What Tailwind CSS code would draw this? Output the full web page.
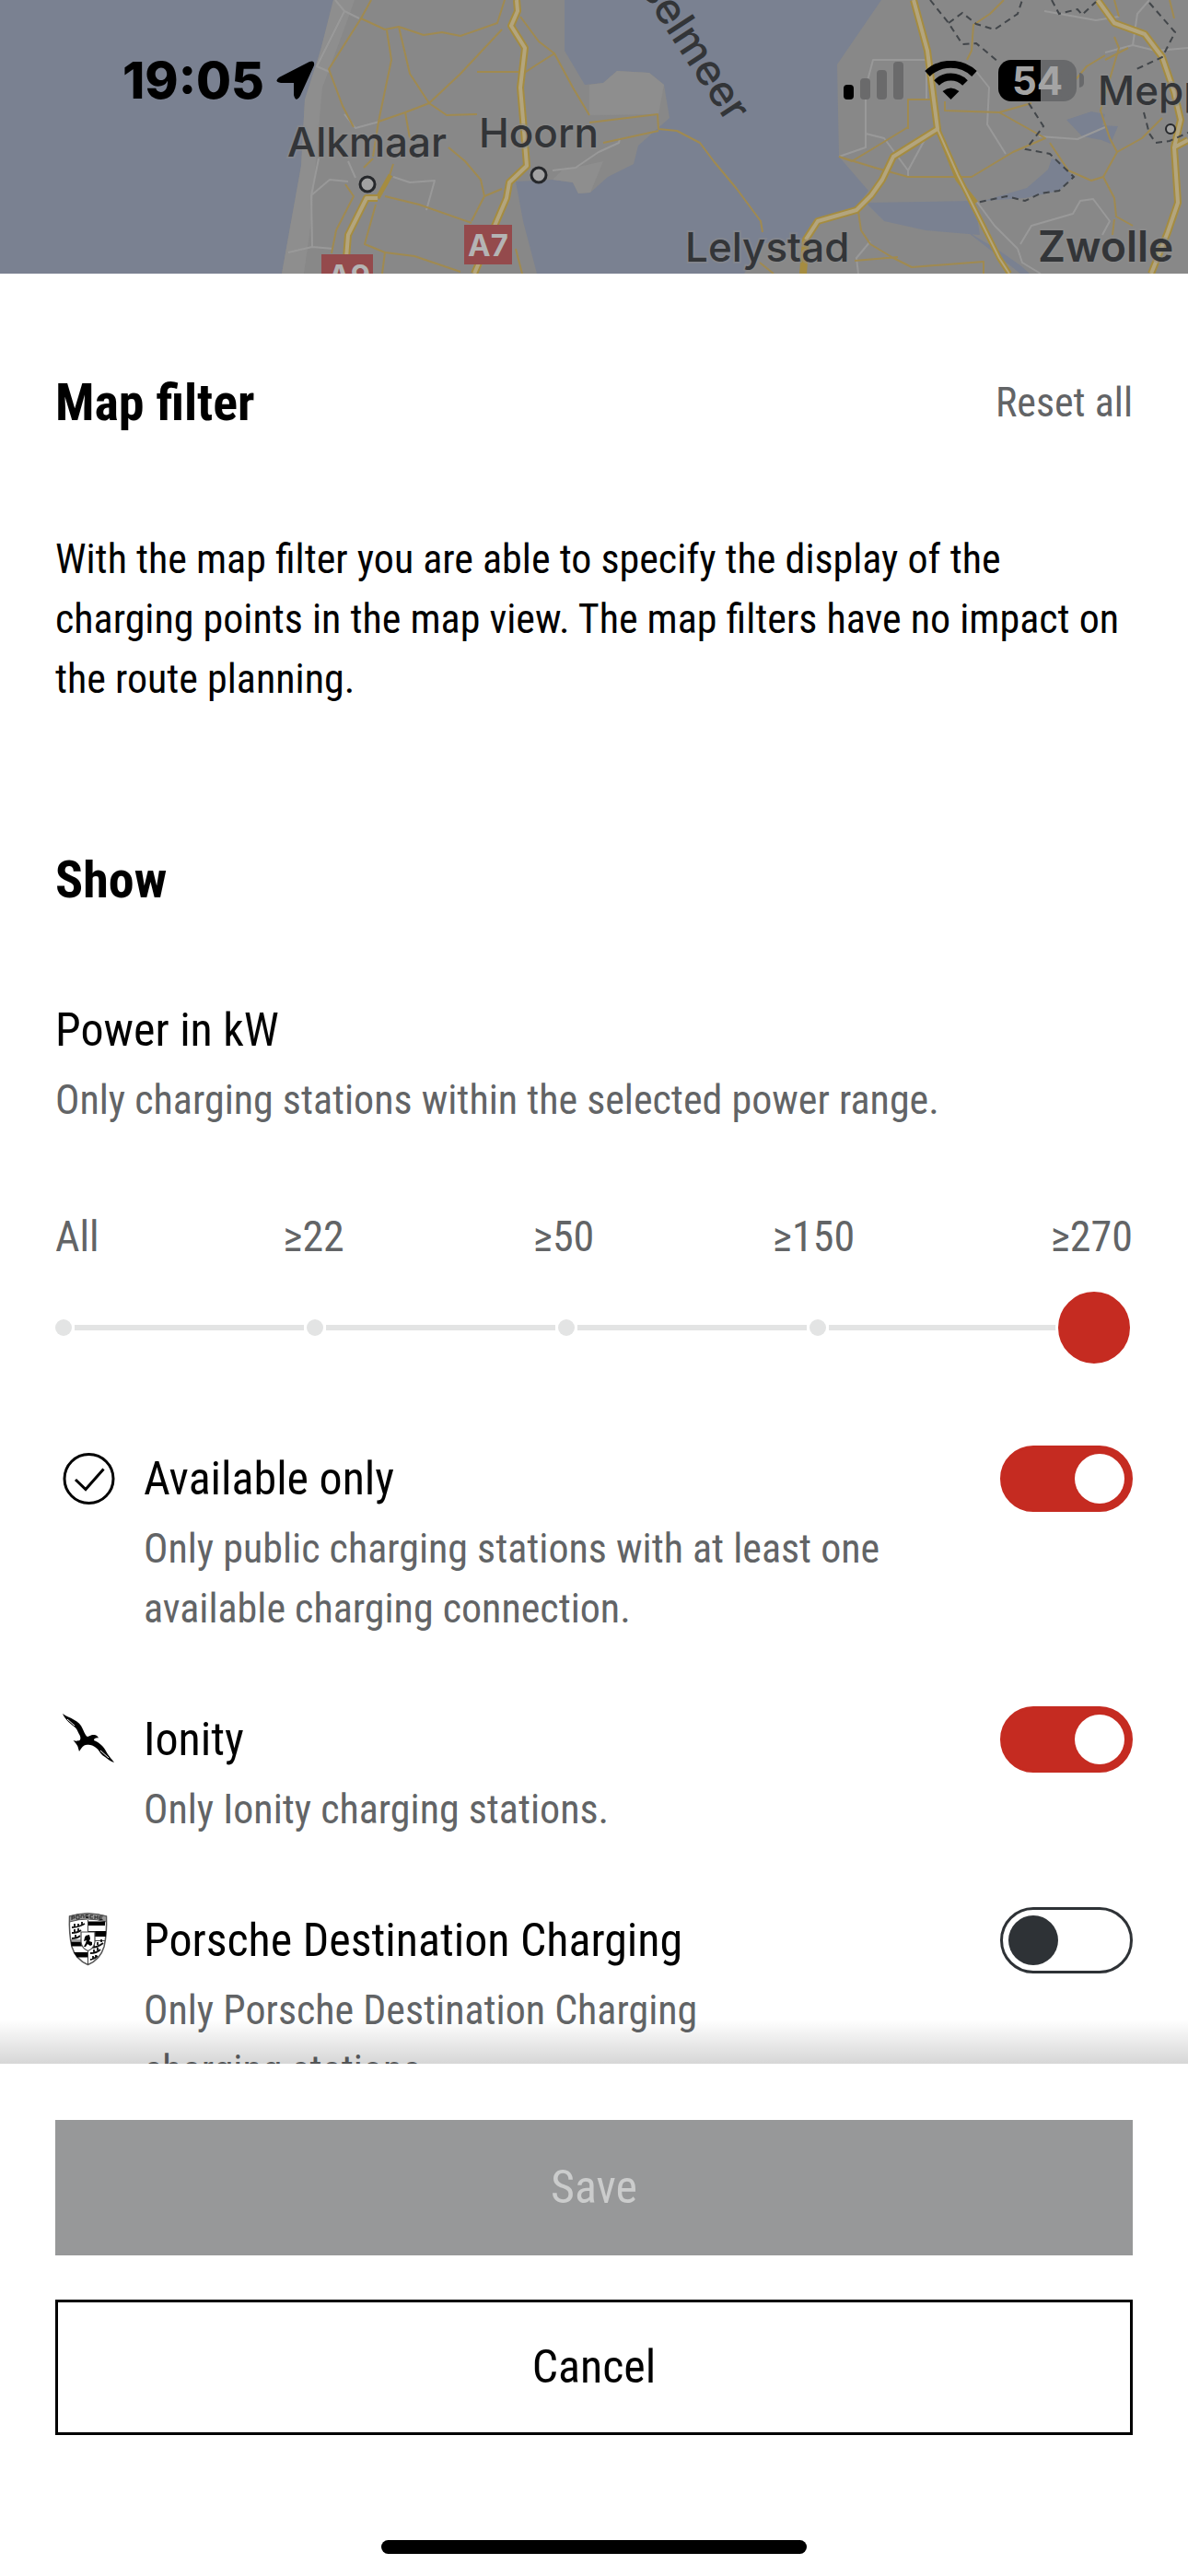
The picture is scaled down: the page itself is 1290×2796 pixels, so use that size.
<!DOCTYPE html>
<html lang="en">
  <head>
    <meta charset="UTF-8" />
    <meta name="viewport" content="width=device-width, initial-scale=1.0" />
    <title>Map filter</title>
    <script src="https://cdn.jsdelivr.net/npm/@tailwindcss/browser@4"></script>
  </head>
  <body
    class="flex h-screen flex-col overflow-hidden bg-white font-['Roboto_Condensed',Roboto,sans-serif] text-[44px] leading-[65px] text-black"
  >
    <!-- map behind the sheet -->
    <header class="relative h-[297px] shrink-0 overflow-hidden bg-[#7a8191]">
      <svg
        class="h-full w-full font-[Inter,sans-serif]"
        viewBox="0 0 1290 297"
        preserveAspectRatio="xMidYMid slice"
        fill="none"
        role="img"
        aria-label="Map of the IJsselmeer region"
      >
        <!-- land -->
        <path
          fill="#888"
          d="M362 0 348 55 331 108 327 180 318 230 306 297H583L568 240 560 197 600 195 622 198 628 210 641 209 660 192 688 178 693 158 727 128 721 92 705 79 670 77 655 90 635 92 613 55V0ZM957 0 909 70 911 170 943 207 926 230 885 243 868 262 830 264 808 297H1290V0Z"
        />
        <path
          fill="#8e8e8e"
          d="M362 0 348 55 331 108 327 180 318 230 306 297H330L338 240 345 150 350 95 378 20 385 0ZM721 92 705 79 670 77 655 90 640 92V125L715 124ZM600 195 622 198 628 210 641 209 655 175 610 185Z"
        />
        <!-- lakes -->
        <path
          fill="#7a8191"
          d="M940 220 1058 218 1064 255 1005 250 960 240ZM1068 218 1115 204 1138 184 1142 172 1152 176 1166 192 1150 207 1113 215ZM1158 130 1185 121 1200 124 1197 136 1214 137 1206 156 1196 152 1175 148ZM1048 250 1085 272 1108 288 1118 297H1108L1084 278Z"
        />
        <!-- minor roads -->
        <g stroke="#999" stroke-width="2" stroke-linejoin="round">
          <path
            d="M364 0 374 12 344 72 358 78M374 12 390 20M374 124 386 139 412 132M346 172 338 212 339 268 313 274M338 212 358 195 378 197M378 175 386 193M427 192 445 198 472 196 463 228M339 268 362 270M600 185 625 182 650 165 672 155 673 150"
          />
          <path
            d="M940 157V95L948 65H1006V107M940 145 960 150 986 185V192M986 185 1005 150M940 145V160L911 170M1058 75 1074 95 1072 135 1092 167M1128 148 1170 151 1200 138M1134 12 1190 22 1215 18M1200 57 1230 49 1255 55 1290 52M1230 49 1235 15 1248 0M1060 218 1080 245 1105 270M1108 265 1120 245 1165 232 1173 218 1187 216 1205 240 1197 255M932 297 930 280 945 262M1105 270 1110 285 1130 297"
          />
        </g>
        <!-- country roads -->
        <g stroke="#a08a50" stroke-width="2" stroke-linejoin="round">
          <path
            d="M403 0 392 20 357 75 372 115 384 138M392 20 418 32 433 29 460 38 480 35 500 39 540 25 548 0M420 33 425 65 411 132 405 170M433 29 445 80 466 112M411 132 440 122 466 112 500 80 545 32M466 112 485 125 518 124M440 122 445 150M565 18 585 45 602 58 622 95 640 125M602 58 580 72 565 82M518 78H565M487 160 505 175 522 195 526 213 512 240M526 213 545 205M418 213 455 222 512 242M405 172 395 182M375 200 384 213 365 250 360 275M408 222 396 265 418 274 450 278 500 295M418 274 415 297M560 270 567 297M427 178 420 200 408 216"
          />
          <path
            d="M640 133 714 124 715 140 735 142 760 155 775 175 800 205 826 240 828 252M715 142 655 155M911 170 950 182 986 192 1055 192 1100 165 1135 150 1085 122M986 140V108H1012M911 170 925 175 950 160 986 138M1026 110V120L1085 122 1120 112M1200 60 1180 72 1165 90M1090 0 1075 15 1057 27 1055 55 1050 65M932 230 935 250 945 265 970 280 990 290 1068 284V297M1215 18 1210 0M1210 40 1215 52 1195 120 1205 150 1213 165 1198 192 1185 196 1160 185 1140 155M1198 192 1210 215 1212 235 1230 245M1213 165 1240 150 1262 128M1270 0 1275 20M1200 65 1225 52M928 283 975 279M825 285 840 297M1210 238 1208 255"
          />
        </g>
        <!-- motorways -->
        <g stroke="#a58c40" stroke-width="8" stroke-linejoin="round">
          <path
            d="M561 0 562 12 555 28 570 52 565 95 568 130 572 180 553 198 550 215 535 250 515 297M410 215H398L378 255 376 280M992 0 1007 55 1018 140 970 170 958 195 946 212 930 228 888 240 875 260 872 297M1192 0 1210 25 1243 37 1262 62 1275 100 1282 130 1275 160 1279 220 1268 252 1250 297M1275 160 1290 152"
          />
          <path
            d="M424 190 410 215M1018 140 1040 195 1060 220"
            stroke-width="5"
          />
          <path d="M1018 140 1040 190 1085 280 1096 297" stroke-width="6" />
        </g>
        <g stroke="#b3a57e" stroke-width="4" stroke-linejoin="round">
          <path
            d="M561 0 562 12 555 28 570 52 565 95 568 130 572 180 553 198 550 215 535 250 515 297M410 215H398L378 255 376 280M992 0 1007 55 1018 140 970 170 958 195 946 212 930 228 888 240 875 260M1192 0 1210 25 1243 37 1262 62 1275 100 1282 130 1275 160 1279 220 1268 252 1250 297M1275 160 1290 152"
          />
          <path d="M1018 140 1040 190 1085 280 1096 297" stroke-width="2" />
        </g>
        <!-- province borders -->
        <path
          stroke="#42464a"
          stroke-width="2"
          stroke-dasharray="7 5"
          d="M1010 0 1030 25 1045 48 1060 47 1085 68M1030 25 1045 14 1060 26 1080 32 1105 15 1110 0M1142 0 1150 15 1170 10 1175 16 1190 2M1248 3 1276 35 1262 62 1232 76M1117 112 1133 137 1114 162 1140 167 1166 192 1150 207 1130 210 1113 218 1093 213 1060 220M1242 122 1248 145 1255 155 1270 153 1290 144"
        />
        <!-- towns -->
        <g fill="#a2a2a2" stroke="#26282b" stroke-width="3">
          <circle cx="399" cy="200" r="8" />
          <circle cx="585" cy="190" r="8" />
          <circle cx="1271" cy="140" r="5" stroke-width="2" />
        </g>
        <!-- road shields -->
        <path fill="#944a4c" d="M504 244h52v43h-52zM349 276h56v30h-56z" />
        <g fill="#b4b4b4" font-size="33" font-weight="700">
          <text x="508" y="278">A7</text>
          <text x="356" y="311">A9</text>
        </g>
        <g
          fill="#333538"
          stroke="#8c8c8c"
          stroke-opacity=".5"
          stroke-width="4"
          paint-order="stroke"
          font-size="44"
          font-weight="500"
        >
          <text x="312" y="170">Alkmaar</text>
          <text x="520" y="160">Hoorn</text>
          <text x="744" y="284">Lelystad</text>
          <text x="1127" y="284" font-size="46" font-weight="600">Zwolle</text>
          <text x="1192" y="114">Meppel</text>
          <text
            transform="translate(790 135) rotate(57)"
            text-anchor="end"
            font-size="46"
            stroke="none"
          >
            IJsselmeer
          </text>
        </g>
      </svg>

      <!-- status bar -->
      <div
        class="absolute inset-x-0 top-0 flex h-[174px] items-center justify-between pr-[113px] pl-[133px] font-[Inter,sans-serif]"
      >
        <div class="flex items-center gap-3">
          <span class="text-[55px] leading-[64px] font-extrabold">19:05</span>
          <svg class="size-11" viewBox="0 0 44 44">
            <path
              d="M4 19 37 2q6-2 5 4L27 39q-5 8-7-1V25H6q-8-1-2-6z"
              fill="#000"
            />
          </svg>
        </div>
        <div class="flex items-center gap-[23px]">
          <svg class="h-[42px] w-[65px]" viewBox="0 0 65 42">
            <rect y="26" width="11" height="16" rx="4" />
            <g fill="#6a6a6b">
              <rect x="18" y="19" width="11" height="23" rx="4" />
              <rect x="36" y="10" width="11" height="32" rx="4" />
              <rect x="54" y="1" width="11" height="41" rx="4" />
            </g>
          </svg>
          <svg
            class="h-[42px] w-[57px]"
            viewBox="0 0 57 42"
            fill="none"
            stroke="#000"
            stroke-width="8"
          >
            <path d="M3 14a37 37 0 0 1 51 0M13 24a22 22 0 0 1 31 0" />
            <path d="M28.500 42l-9-9q9-7 18 0z" fill="#000" stroke="none" />
          </svg>
          <div class="flex items-center gap-[3px]">
            <div
              class="flex h-[45px] w-[85px] items-center justify-center rounded-[14px] bg-linear-to-r from-black from-54% to-[#68696b] to-54% text-[42px] leading-[45px] font-bold text-[#a4a4a4]"
            >
              54
            </div>
            <div class="h-4 w-[5px] rounded-r-full bg-[#68696b]"></div>
          </div>
        </div>
      </div>
    </header>

    <main class="relative min-h-0 flex-1 overflow-hidden px-[60px]">
      <div class="mt-[104px] flex items-center justify-between">
        <h1 class="text-[56px] leading-[72px] font-bold">Map filter</h1>
        <button type="button" class="text-[#626466]">Reset all</button>
      </div>
      <p class="mt-[102px]">
        With the map filter you are able to specify the display of the
        charging points in the map view. The map filters have no impact on
        the route planning.
      </p>

      <h2 class="mt-[149px] text-[56px] leading-[72px] font-bold">Show</h2>
      <label for="power" class="mt-[91px] block text-[50px] leading-[72px]">
        Power in kW
      </label>
      <p id="power-hint" class="mt-2 text-[#626466]">
        Only charging stations within the selected power range.
      </p>

      <!-- slider -->
      <div
        class="mt-[83px] flex justify-between text-[46px] whitespace-nowrap text-[#626466]"
      >
        <span class="flex w-[18px]">All</span>
        <span class="flex w-[18px] justify-center">≥22</span>
        <span class="flex w-[18px] justify-center">≥50</span>
        <span class="flex w-[18px] justify-center">≥150</span>
        <span class="flex w-[84px] justify-end">≥270</span>
      </div>
      <div class="relative mt-6 flex h-[84px] items-center gap-[3px]">
        <i class="size-[18px] rounded-full bg-[#e3e4e4]"></i>
        <i class="h-1.5 flex-1 bg-[#e3e4e4]"></i>
        <i class="size-[18px] rounded-full bg-[#e3e4e4]"></i>
        <i class="h-1.5 flex-1 bg-[#e3e4e4]"></i>
        <i class="size-[18px] rounded-full bg-[#e3e4e4]"></i>
        <i class="h-1.5 flex-1 bg-[#e3e4e4]"></i>
        <i class="size-[18px] rounded-full bg-[#e3e4e4]"></i>
        <i class="h-1.5 flex-1 bg-[#e3e4e4]"></i>
        <i class="w-[78px]"></i>
        <input
          id="power"
          type="range"
          min="0"
          max="4"
          value="4"
          aria-describedby="power-hint"
          class="absolute inset-0 h-full w-full appearance-none bg-transparent [&::-webkit-slider-thumb]:size-[84px] [&::-webkit-slider-thumb]:appearance-none [&::-webkit-slider-thumb]:rounded-full [&::-webkit-slider-thumb]:border-[3px] [&::-webkit-slider-thumb]:border-white [&::-webkit-slider-thumb]:bg-[#c52b21]"
        />
      </div>

      <!-- filters -->
      <ul class="mt-[86px] flex flex-col gap-[73px]">
        <li class="flex items-start">
          <svg
            class="mr-6 h-[72px] w-[72px] shrink-0"
            viewBox="0 0 72 72"
            fill="none"
            stroke="#000"
            stroke-width="3"
          >
            <circle cx="36.500" cy="36" r="26.500" />
            <path d="M22 37l11 10.500 19.500-22" />
          </svg>
          <div class="flex-1">
            <label for="available" class="block text-[50px] leading-[72px]">
              Available only
            </label>
            <p class="mt-2 text-[#626466]">
              Only public charging stations with at least one<br />
              available charging connection.
            </p>
          </div>
          <input
            id="available"
            type="checkbox"
            role="switch"
            checked
            class="flex h-[72px] w-36 appearance-none items-center rounded-full border-[3px] border-[#2e3236] px-1.5 before:size-[54px] before:rounded-full before:bg-[#2e3236] checked:justify-end checked:border-[#c52b21] checked:bg-[#c52b21] checked:before:bg-white"
          />
        </li>
        <li class="flex items-start">
          <svg class="mr-6 h-[72px] w-[72px] shrink-0" viewBox="0 0 72 72">
            <path
              d="M8 8C12 11 16 12 20 14.500 25 17 28 20 29.500 24 31 27 32 30 34 32.500 36 34 38 31 41 31 44 30.500 46 32 47 34.500 44 34 42 35 42 37 45 38 48 40 51 43 54 46 55 49 57 52 59 55 61 57 64 61 60 60 57 57 54 55 50 53 48 49 46 46.500 43 44 41 42.500 38 42 35 41.500 33 41.500 31.500 42.500 29 44 28 46 26 49 25 46 25 44 23.500 42 22.500 40 21 39 19.500 37 22 38 25 38 27 36.500 28 34 27 32 25.500 29.500 24 26 23 24 21 22.500 18 20 15 18 13 15.500 11 13 9 11 8 8Z"
            />
            <path
              d="M13 14l8 7M49 48l9 8"
              fill="none"
              stroke="#fff"
              stroke-width="1"
            />
          </svg>
          <div class="flex-1">
            <label for="ionity" class="block text-[50px] leading-[72px]">
              Ionity
            </label>
            <p class="mt-2 text-[#626466]">Only Ionity charging stations.</p>
          </div>
          <input
            id="ionity"
            type="checkbox"
            role="switch"
            checked
            class="flex h-[72px] w-36 appearance-none items-center rounded-full border-[3px] border-[#2e3236] px-1.5 before:size-[54px] before:rounded-full before:bg-[#2e3236] checked:justify-end checked:border-[#c52b21] checked:bg-[#c52b21] checked:before:bg-white"
          />
        </li>
        <li class="flex items-start">
          <svg
            class="mr-6 h-[72px] w-[72px] shrink-0"
            viewBox="0 0 72 72"
            fill="none"
            stroke="#222"
          >
            <path
              d="M15.500 10Q35 4 55.500 10C56 22 55 34 53 43 50 53 44 59 35.500 62.500 27 59 21 53 18 43 16 34 15 22 15.500 10z"
              fill="#fff"
              stroke="#555"
              stroke-width="1.500"
            />
            <!-- name band -->
            <path
              d="M15.500 10Q35 4 55.500 10V16Q35 10 15.500 16z"
              fill="#999"
              stroke="#555"
              stroke-width="1"
            />
            <path
              d="M18 14v-4h3v2h-3M23 13v-4h3v4zM28 12V9h3v3M33 11.500h3v-1h-3v-2h3M41 9h-3v3h3M43 9v4m3-4v4m-3-2h3M51.500 10H48v3.500h3.500M48 12h3"
              stroke="#222"
              stroke-width="1"
            />
            <!-- stripes -->
            <path
              d="M35.500 15.500H54V20H35.500zM35.500 26H55V32H35.500zM17 37.500H35V42.500H17.500zM20 49h15.500v5.500H23.500z"
              fill="#000"
              stroke="none"
            />
            <path
              d="M35.500 14v48M16 36h20M35.500 36.500H54"
              stroke="#444"
              stroke-width="1"
            />
            <!-- antlers -->
            <path
              d="M18 22q7 0 14-4M21 21v-3m4 3v-3m4 1v-3M18 28q6 0 10-3M21 27v-3m4 2v-3M18 34q6 0 9-3M22 33v-3M38 44q8 0 14-5M42 43v-3m4 1v-3m4 0v-3M38 50q7 0 11-4M42 49v-3m4 1v-3M38 57q5-1 8-4M41 56v-3m3 1v-2"
              stroke="#111"
              stroke-width="1.800"
            />
            <!-- horse -->
            <path
              d="M28 27h15v11q-1 7-7.500 9.500Q29 45 28 38z"
              fill="#fff"
              stroke="#444"
              stroke-width="1.200"
            />
            <path
              d="M33 31l4-1 1 4-1 3 3 1v3l-2 1-3-2-2 3h-2l2-4 1-3-3 1 1-4z"
              fill="#000"
              stroke="none"
            />
          </svg>
          <div class="flex-1">
            <label for="destination" class="block text-[50px] leading-[72px]">
              Porsche Destination Charging
            </label>
            <p class="mt-2 text-[#626466]">
              Only Porsche Destination Charging<br />
              charging stations.
            </p>
          </div>
          <input
            id="destination"
            type="checkbox"
            role="switch"
            class="flex h-[72px] w-36 appearance-none items-center rounded-full border-[3px] border-[#2e3236] px-1.5 before:size-[54px] before:rounded-full before:bg-[#2e3236] checked:justify-end checked:border-[#c52b21] checked:bg-[#c52b21] checked:before:bg-white"
          />
        </li>
      </ul>
      <!-- fade above the buttons -->
      <div
        class="pointer-events-none absolute inset-x-0 bottom-0 h-12 bg-linear-to-t from-black/16 to-transparent"
      ></div>
    </main>

    <footer class="flex shrink-0 flex-col px-[60px] pt-[61px] pb-6 text-[50px]">
      <button type="button" disabled class="h-[147px] bg-[#979899] text-[#cbcccc]">
        Save
      </button>
      <button type="button" class="mt-12 h-[147px] border-[3px] border-black">
        Cancel
      </button>
      <div class="mx-auto mt-[114px] h-[15px] w-[462px] rounded-full bg-black"></div>
    </footer>
  </body>
</html>
